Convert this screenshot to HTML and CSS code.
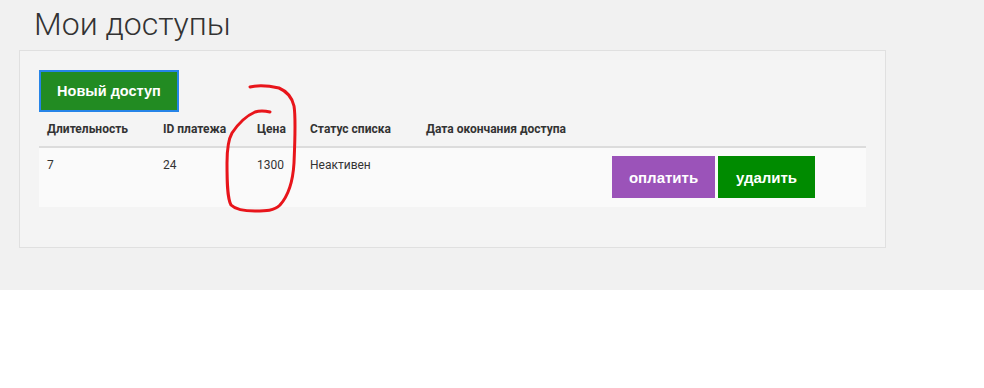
FILE: index.html
```html
<!DOCTYPE html>
<html lang="ru">
<head>
    <meta charset="UTF-8">
    <title>Мои доступы</title>
    <link rel="stylesheet" href="styles.css">
</head>
<body>

<div class="page">

    <h1 class="page-title">Мои доступы</h1>

    <div class="panel">

        <button class="btn btn-new">Новый доступ</button>

        <table class="access-table">
            <colgroup>
                <col class="col-duration">
                <col class="col-payment">
                <col class="col-price">
                <col class="col-status">
                <col class="col-date">
                <col>
            </colgroup>
            <thead>
                <tr>
                    <th>Длительность</th>
                    <th>ID платежа</th>
                    <th>Цена</th>
                    <th>Статус списка</th>
                    <th>Дата окончания доступа</th>
                    <th></th>
                </tr>
            </thead>
            <tbody>
                <tr>
                    <td>7</td>
                    <td>24</td>
                    <td>1300</td>
                    <td>Неактивен</td>
                    <td></td>
                    <td class="actions">
                        <button class="btn btn-pay">оплатить</button>
                        <button class="btn btn-delete">удалить</button>
                    </td>
                </tr>
            </tbody>
        </table>
    </div>

    <!--red marker scribble round the price column-->
    <svg class="scribble" width="984" height="388" viewBox="0 0 984 388">
        <path d="M250 87 C258 85 270 86 279 88 C286 91 292 97 294 106 C296 118 295 140 294 163 C293 180 289 195 280 205 C274 211 266 211 255 211 C246 211 236 210 231 205 C227 198 227 180 227 163 C227 150 228 140 232 133 C238 124 246 116 255 112 C261 110 266 111 270 112"
              fill="none" stroke="#e8151b" stroke-width="3" stroke-linecap="round" stroke-linejoin="round"/>
    </svg>
</div>

</body>
</html>
```

FILE: styles.css
```css
body, html {
    margin: 0;
    padding: 0;
    background: #fff;
    font-family: "Roboto", "Liberation Sans", sans-serif;
    color: #333;
}

.page {
    position: relative;
    height: 290px;
    padding: 1px 0 0 0;
    box-sizing: border-box;
    background: #f1f1f1;
}

.page-title {
    margin: 0 0 0 34px;
    height: 49px;
    font-size: 32px;
    font-weight: 300;
    line-height: 46px;
    color: #333;
}

.panel {
    width: 867px;
    height: 198px;
    margin-left: 19px;
    padding: 19px;
    box-sizing: border-box;
    background: #f4f4f4;
    border: 1px solid #e0e0e0;
}

.btn {
    border: none;
    color: #fff;
    font-family: "Liberation Sans", Arial, sans-serif;
    font-weight: bold;
    font-size: 15px;
    cursor: pointer;
    padding: 0;
}

.btn-new {
    display: block;
    width: 140px;
    height: 42px;
    font-size: 14.5px;
    background: #228b22;
    border: 2px solid #2684e8;
}

.access-table {
    width: 827px;
    table-layout: fixed;
    border-collapse: collapse;
    font-size: 12px;
}

.col-duration { width: 116px; }
.col-payment { width: 94px; }
.col-price { width: 53px; }
.col-status { width: 116px; }
.col-date { width: 186px; }

.access-table th {
    text-align: left;
    font-weight: bold;
    padding: 8px 8px;
    line-height: 18px;
    border-bottom: 2px solid #dcdcdc;
    color: #333;
    white-space: nowrap;
}

.access-table td {
    padding: 8px 8px 9px 8px;
    line-height: 18px;
    vertical-align: top;
    background: #fafafa;
    color: #333;
}

.access-table td.actions {
    font-size: 0;
    white-space: nowrap;
}

.btn-pay {
    width: 103px;
    height: 42px;
    background: #9b53b9;
}

.btn-delete {
    width: 97px;
    height: 42px;
    margin-left: 3px;
    background: #008b00;
}

.scribble {
    position: absolute;
    left: 0;
    top: 0;
    pointer-events: none;
}
```
